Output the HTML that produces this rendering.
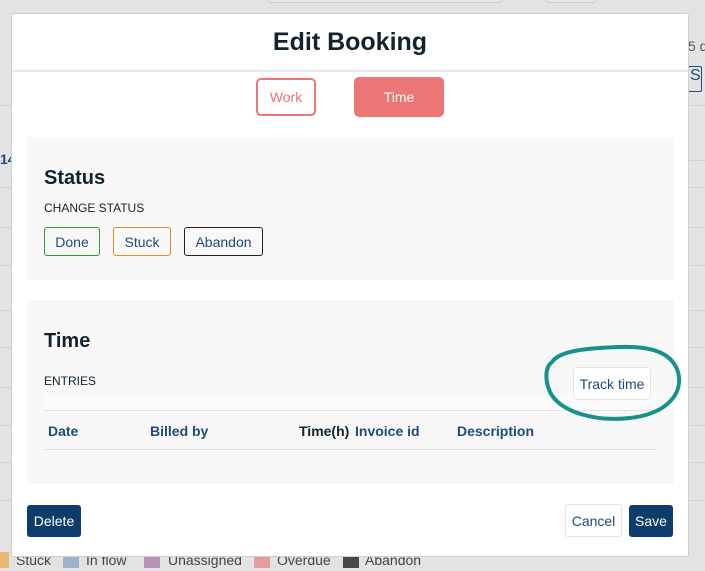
<!DOCTYPE html>
<html><head><meta charset="utf-8"><style>
*{box-sizing:border-box;margin:0;padding:0}
body{width:705px;height:571px;background:#e3e3e3;position:relative;overflow:hidden;font-family:"Liberation Sans",sans-serif}
.a{position:absolute}
.hl{position:absolute;left:0;width:705px;height:1px;background:#d2d2d2}
.modal{position:absolute;left:11px;top:13px;width:678px;height:544px;background:#fff;border-radius:3px;border:1px solid #cfcfcf}
.btn{position:absolute;border-radius:3px;font-size:14px;color:#1f4a7a;display:flex;align-items:center;justify-content:center}
.panel{position:absolute;left:15px;width:647px;background:#f8f8f8}
h2{position:absolute;font-size:20px;font-weight:bold;color:#12232e;left:17px}
.lbl{position:absolute;left:17px;font-size:12px;color:#12232e}
.th{position:absolute;top:123px;font-size:14px;font-weight:bold;color:#1f4a7a}
.lg span{display:inline-block}
</style></head><body>
<div class="hl" style="top:105px"></div><div class="hl" style="top:160px"></div><div class="hl" style="top:187px"></div><div class="hl" style="top:227px"></div><div class="hl" style="top:265px"></div><div class="hl" style="top:310px"></div><div class="hl" style="top:347px"></div><div class="hl" style="top:387px"></div><div class="hl" style="top:425px"></div><div class="hl" style="top:462px"></div><div class="hl" style="top:500px"></div>
<div class="a" style="left:268px;top:-6px;width:234px;height:9px;border:1px solid #ccc;border-radius:3px;background:#e8e8e8"></div>
<div class="a" style="left:546px;top:-6px;width:50px;height:9px;border:1px solid #ccc;border-radius:3px;background:#e8e8e8"></div>
<div class="a" style="left:688px;top:38px;font-size:14px;color:#555;white-space:nowrap">5 d</div>
<div class="a" style="left:688px;top:66px;width:14px;height:26px;border:1px solid #1f4a7a;border-radius:2px;font-size:16px;color:#1f4a7a;padding-left:1px">S</div>
<div class="a" style="left:0;top:151px;font-size:14px;font-weight:bold;color:#1f4a7a">14</div>
<div class="a lg" style="top:552px;left:0;height:16px;font-size:14px;color:#444;white-space:nowrap">
<span class="a" style="left:0;width:9px;height:16px;background:#e6b874"></span><span class="a" style="left:16px">Stuck</span>
<span class="a" style="left:63px;width:16px;height:16px;background:#9db0cc"></span><span class="a" style="left:86px">In flow</span>
<span class="a" style="left:144px;width:16px;height:16px;background:#b994b9"></span><span class="a" style="left:168px">Unassigned</span>
<span class="a" style="left:254px;width:16px;height:16px;background:#e49c9c"></span><span class="a" style="left:277px">Overdue</span>
<span class="a" style="left:343px;width:16px;height:16px;background:#444a4a"></span><span class="a" style="left:365px">Abandon</span></div>
<div class="modal">
<div class="a" style="left:0;top:14px;width:676px;text-align:center;font-size:25px;font-weight:bold;color:#12232e">Edit Booking</div>
<div class="a" style="left:0;top:56px;width:676px;height:2px;background:#e8e8e8"></div>
<div class="btn" style="left:244px;top:64px;width:60px;height:38px;border:2px solid #ec7575;color:#ec7575;border-radius:5px">Work</div>
<div class="btn" style="left:342px;top:63px;width:90px;height:40px;background:#ec7575;color:#fff;border-radius:5px">Time</div>
<div class="panel" style="top:123px;height:143px">
<h2 style="top:30px">Status</h2>
<div class="lbl" style="top:64px">CHANGE STATUS</div>
<div class="btn" style="left:17px;top:90px;width:56px;height:29px;border:1px solid #2a9d2a">Done</div>
<div class="btn" style="left:86px;top:90px;width:58px;height:29px;border:1px solid #e08a2a">Stuck</div>
<div class="btn" style="left:157px;top:90px;width:79px;height:29px;border:1px solid #222">Abandon</div>
</div>
<div class="panel" style="top:286px;height:184px">
<h2 style="top:30px">Time</h2>
<div class="lbl" style="top:74px">ENTRIES</div>
<div class="a" style="left:17px;top:95px;width:613px;height:15px;background:#fbfbfb"></div>
<div class="a" style="left:17px;top:110px;width:613px;height:1px;background:#e3e3e3"></div>
<div class="a" style="left:17px;top:149px;width:613px;height:1px;background:#e3e3e3"></div>
<div class="th" style="left:21px">Date</div>
<div class="th" style="left:123px">Billed by</div>
<div class="th" style="left:272px;color:#12232e">Time(h)</div>
<div class="th" style="left:328px">Invoice id</div>
<div class="th" style="left:430px">Description</div>
<div class="btn" style="left:546px;top:67px;width:78px;height:33px;background:#fff;border:1px solid #e6e6e6">Track time</div>
</div>
<div class="btn" style="left:15px;top:491px;width:54px;height:32px;background:#0f3d6b;color:#fff">Delete</div>
<div class="btn" style="left:553px;top:490px;width:57px;height:33px;background:#fff;border:1px solid #e4e4e4">Cancel</div>
<div class="btn" style="left:617px;top:491px;width:44px;height:32px;background:#0f3d6b;color:#fff">Save</div>
</div>
<svg class="a" style="left:0;top:0" width="705" height="571"><path d="M552 362 C560 350,590 348,620 347 C650 346,672 352,678 372 C684 395,665 414,630 418 C595 422,560 412,550 392 C544 378,546 366,552 362" fill="none" stroke="#17908e" stroke-width="4" stroke-linecap="round"/></svg>
</body></html>
